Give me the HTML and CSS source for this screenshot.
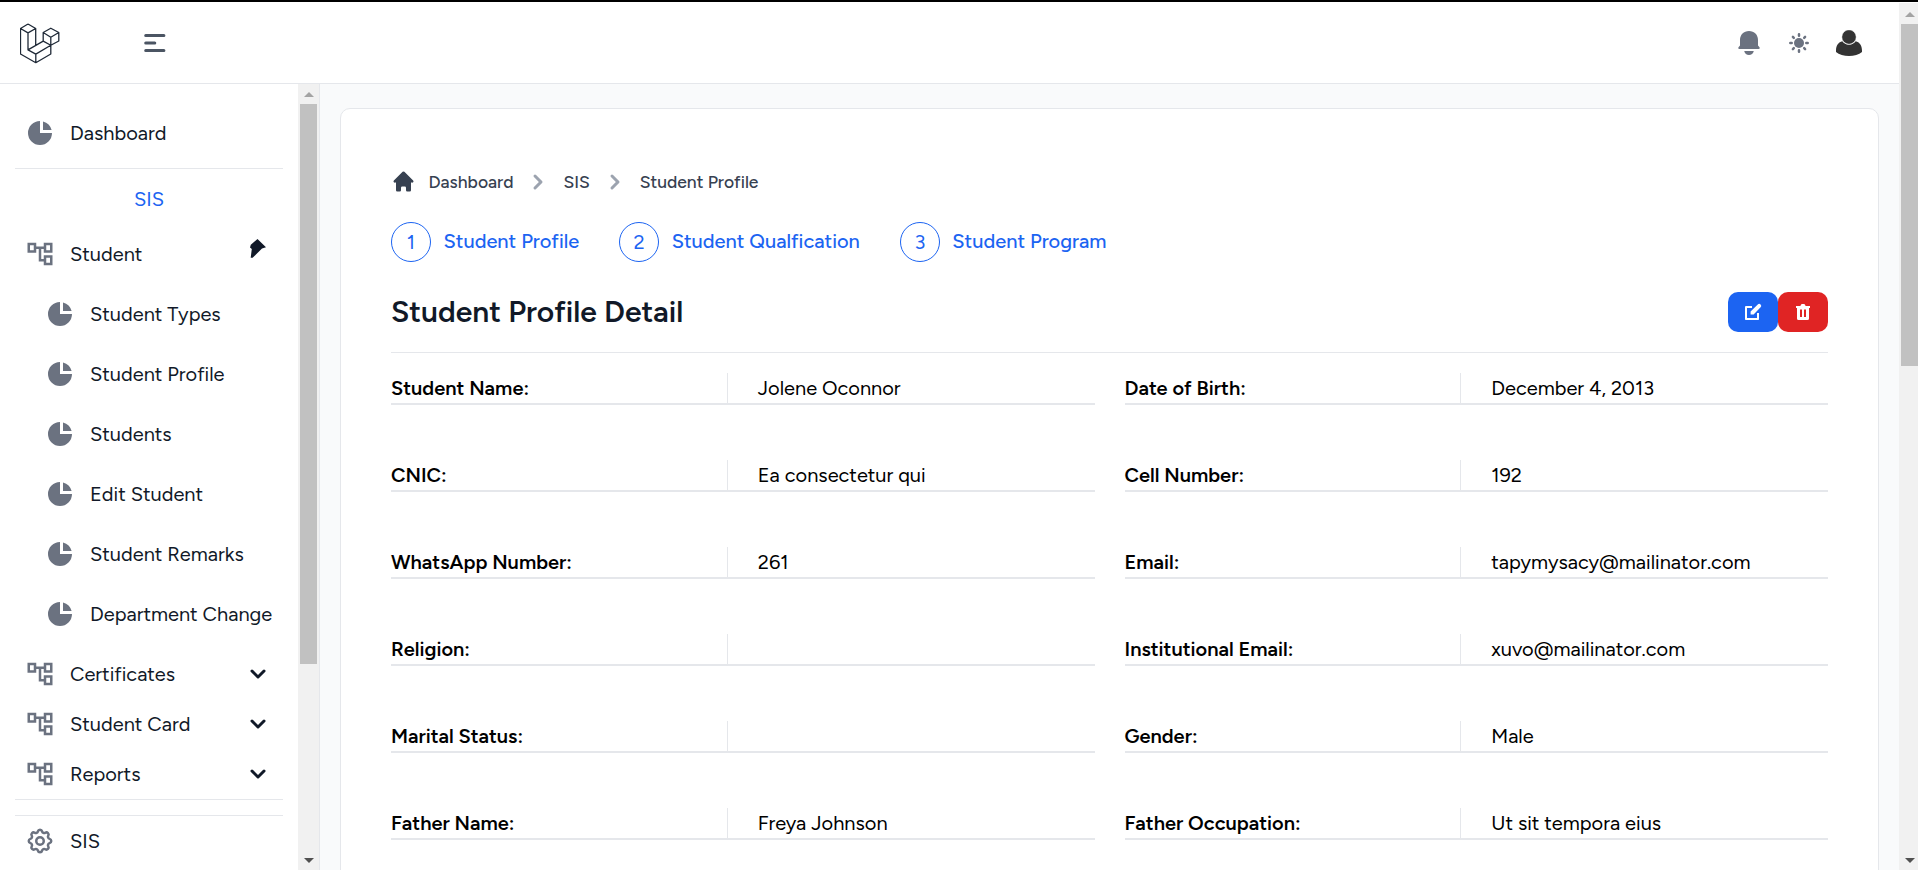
FILE: index.html
```html
<!DOCTYPE html>
<html lang="en">
<head>
<meta charset="utf-8">
<title>Student Profile</title>
<link rel="stylesheet" href="styles.css">
</head>
<body>
<svg class="defs" width="0" height="0" aria-hidden="true">
  <symbol id="pie" viewBox="0 0 20 20"><path d="M2 10a8 8 0 018-8v8h8a8 8 0 11-16 0z"/><path d="M12 2.252A8.014 8.014 0 0117.748 8H12V2.252z"/></symbol>
  <symbol id="tree" viewBox="0 0 24 24"><path d="M22 11V3h-7v3H9V3H2v8h7V8h2v10h4v3h7v-8h-7v3h-2V8h2v3h7zM7 9H4V5h3v4zm10 6h3v4h-3v-4zm0-10h3v4h-3V5z"/></symbol>
  <symbol id="down" viewBox="0 0 20 20"><path d="M5.293 7.293a1 1 0 011.414 0L10 10.586l3.293-3.293a1 1 0 111.414 1.414l-4 4a1 1 0 01-1.414 0l-4-4a1 1 0 010-1.414z"/></symbol>
  <symbol id="right" viewBox="0 0 20 20"><path d="M7.293 14.707a1 1 0 010-1.414L10.586 10 7.293 6.707a1 1 0 011.414-1.414l4 4a1 1 0 010 1.414l-4 4a1 1 0 01-1.414 0z"/></symbol>
</svg>
<header class="topbar">
  <svg class="logo" viewBox="0 0 40 41"><path d="M8 1 .5 5.500v25.500l15.300 8.700 15-8.700v-8.700l8-4.300V9.500L30.800 5.200 23.200 9.500v8.600L8 26.900V9.900L15.700 5.500 8 1M.5 5.500 8 9.900M15.700 5.500v17M8 26.900l7.800 4.200v8.600M15.800 31.100l15-8.800-7.600-4.200M23.200 9.500l7.600 4.700 8-4.700M30.800 14.200v8.100"/></svg>
  <svg class="burger" viewBox="0 0 22 18"><path d="M1.700 1.500h18.200M1.700 9h9.100M1.700 16.500h18.200"/></svg>
  <div class="tools">
    <svg class="bell" viewBox="0 0 22 25"><path d="M11 0c5.300 0 9 3.800 9 9v5.600l1.500 1.700c.5.900.2 1.700-.8 1.700H1.300c-1 0-1.300-.8-.8-1.700L2 14.600V9c0-5.200 3.700-9 9-9zM6.200 20h9.600c-.6 2.400-2.400 4-4.800 4s-4.200-1.600-4.800-4z"/></svg>
    <svg class="sun" viewBox="0 0 20 20"><circle cx="10" cy="10" r="5"/><path d="M10 1.300v1.400M10 17.300v1.400M1.300 10h1.400M17.300 10h1.400M3.900 3.900l.9.900M15.200 15.200l.9.900M3.900 16.100l.9-.9M15.200 4.800l.9-.9"/></svg>
    <svg class="user" viewBox="0 0 26 26"><path d="M0 20.500C0 15.500 2.600 12 6.300 11.300c1.500 2 4 3.400 6.700 3.400s5.200-1.400 6.700-3.400C23.400 12 26 15.500 26 20.500v1.600C23 24.900 18 26 13 26S3 24.900 0 22.100z"/><circle cx="13" cy="7" r="7.200"/></svg>
  </div>
</header>
<div class="frame">
  <aside class="side">
    <nav class="menu">
      <a class="item"><svg class="ic"><use href="#pie"/></svg><span class="t">Dashboard</span></a>
      <div class="group">SIS</div>
      <a class="item"><svg class="ic"><use href="#tree"/></svg><span class="t">Student</span><svg class="pin" viewBox="0 0 16 19"><path d="M7.500 0 16 8.200l-4 1.400-9.400 9.200H.7L1.800 10 0 8.400l.8-2.700z"/></svg></a>
      <div class="sub">
        <a class="item"><svg class="ic"><use href="#pie"/></svg><span class="t">Student Types</span></a>
        <a class="item"><svg class="ic"><use href="#pie"/></svg><span class="t">Student Profile</span></a>
        <a class="item"><svg class="ic"><use href="#pie"/></svg><span class="t">Students</span></a>
        <a class="item"><svg class="ic"><use href="#pie"/></svg><span class="t">Edit Student</span></a>
        <a class="item"><svg class="ic"><use href="#pie"/></svg><span class="t">Student Remarks</span></a>
        <a class="item"><svg class="ic"><use href="#pie"/></svg><span class="t">Department Change</span></a>
      </div>
      <a class="item"><svg class="ic"><use href="#tree"/></svg><span class="t">Certificates</span><svg class="ar"><use href="#down"/></svg></a>
      <a class="item"><svg class="ic"><use href="#tree"/></svg><span class="t">Student Card</span><svg class="ar"><use href="#down"/></svg></a>
      <a class="item"><svg class="ic"><use href="#tree"/></svg><span class="t">Reports</span><svg class="ar"><use href="#down"/></svg></a>
      <div class="gap"></div>
      <a class="item"><svg class="ic gear" viewBox="0 0 24 24"><path d="M10.325 4.317c.426-1.756 2.924-1.756 3.350 0a1.724 1.724 0 002.573 1.066c1.543-.940 3.310.826 2.370 2.370a1.724 1.724 0 001.065 2.572c1.756.426 1.756 2.924 0 3.350a1.724 1.724 0 00-1.066 2.573c.940 1.543-.826 3.310-2.370 2.370a1.724 1.724 0 00-2.572 1.065c-.426 1.756-2.924 1.756-3.350 0a1.724 1.724 0 00-2.573-1.066c-1.543.940-3.310-.826-2.370-2.370a1.724 1.724 0 00-1.065-2.572c-1.756-.426-1.756-2.924 0-3.350a1.724 1.724 0 001.066-2.573c-.940-1.543.826-3.310 2.370-2.370.996.608 2.296.070 2.572-1.065z"/><circle cx="12" cy="12" r="3"/></svg><span class="t">SIS</span></a>
    </nav>
    <div class="bar"><i class="up"></i><i class="thumb"></i><i class="dn"></i></div>
  </aside>
  <main class="main">
    <section class="card">
      <div class="crumbs">
        <svg class="home" viewBox="0 0 20 20"><path d="M10.707 2.293a1 1 0 00-1.414 0l-7 7a1 1 0 001.414 1.414L4 10.414V17a1 1 0 001 1h2a1 1 0 001-1v-2a1 1 0 011-1h2a1 1 0 011 1v2a1 1 0 001 1h2a1 1 0 001-1v-6.586l.293.293a1 1 0 001.414-1.414l-7-7z"/></svg>
        <span>Dashboard</span><svg class="chev"><use href="#right"/></svg><span>SIS</span><svg class="chev"><use href="#right"/></svg><span>Student Profile</span>
      </div>
      <div class="steps">
        <div class="step"><b>1</b><span>Student Profile</span></div>
        <div class="step"><b>2</b><span>Student Qualfication</span></div>
        <div class="step"><b>3</b><span>Student Program</span></div>
      </div>
      <div class="head">
        <h1>Student Profile Detail</h1>
        <div class="btn edit"><svg viewBox="0 0 20 20"><path d="M17.600 2.400a2 2 0 00-2.828 0L7.600 9.600v3h3l7-7.372a2 2 0 000-2.828z"/><path d="M3 4h6v2H4v10h10v-5h2v6.200a.8.800 0 01-.8.800H2.800a.8.800 0 01-.8-.8V5a1 1 0 011-1z"/></svg></div>
        <div class="btn del"><svg viewBox="0 0 20 20"><path fill-rule="evenodd" d="M9 2a1 1 0 00-.894.553L7.382 4H3v2h1v10.500a1.500 1.500 0 001.500 1.500h9a1.500 1.500 0 001.500-1.500V6h1V4h-4.382l-.724-1.447A1 1 0 0011 2H9zM7 7.500h2v7.500H7zM11 7.500h2v7.500h-2z"/></svg></div>
      </div>
      <div class="grid">
        <div class="row"><div class="k">Student Name:</div><div class="v">Jolene Oconnor</div></div>
        <div class="row"><div class="k">Date of Birth:</div><div class="v">December 4, 2013</div></div>
        <div class="row"><div class="k">CNIC:</div><div class="v">Ea consectetur qui</div></div>
        <div class="row"><div class="k">Cell Number:</div><div class="v">192</div></div>
        <div class="row"><div class="k">WhatsApp Number:</div><div class="v">261</div></div>
        <div class="row"><div class="k">Email:</div><div class="v">tapymysacy@mailinator.com</div></div>
        <div class="row"><div class="k">Religion:</div><div class="v"></div></div>
        <div class="row"><div class="k">Institutional Email:</div><div class="v">xuvo@mailinator.com</div></div>
        <div class="row"><div class="k">Marital Status:</div><div class="v"></div></div>
        <div class="row"><div class="k">Gender:</div><div class="v">Male</div></div>
        <div class="row"><div class="k">Father Name:</div><div class="v">Freya Johnson</div></div>
        <div class="row"><div class="k">Father Occupation:</div><div class="v">Ut sit tempora eius</div></div>
      </div>
    </section>
  </main>
</div>
<div class="bar pagebar"><i class="up"></i><i class="thumb"></i><i class="dn"></i></div>
</body>
</html>
```

FILE: styles.css
```css
* { box-sizing: border-box; }
body { margin: 0; width: 1918px; height: 870px; overflow: hidden; display: grid; grid-template: 84px 786px / 1899px 19px; font-family: Figtree, Lato, sans-serif; font-size: 20px; line-height: 30px; color: #111928; background: #fff; box-shadow: inset 0 2px #000; }
svg { display: block; flex: none; fill: currentColor; }
.defs { position: absolute; }
.topbar { display: flex; align-items: center; padding: 3px 37px 0 20px; border-bottom: 1px solid #e5e7eb; }
.logo { width: 40px; height: 41px; fill: none; stroke: #1f2937; stroke-width: 1.3; stroke-linejoin: round; }
.burger { width: 22px; height: 18px; margin-left: 84px; fill: none; stroke: #4b5563; stroke-width: 3; stroke-linecap: round; }
.tools { margin-left: auto; display: flex; align-items: center; color: #6b7280; }
.bell { width: 22px; height: 25px; margin-right: 29px; }
.sun { width: 20px; height: 20px; margin-right: 27px; stroke: currentColor; stroke-width: 2.5; stroke-linecap: round; }
.sun circle { stroke: none; }
.user { width: 26px; height: 26px; color: #333; }
.user circle { stroke: #fff; stroke-width: .5; }
.frame { grid-row: 2; display: flex; overflow: hidden; }
.side { width: 320px; display: flex; border-right: 1px solid #e5e7eb; flex: none; }
.menu { width: 298px; padding: 24px 15px 0; }
.item { display: flex; align-items: center; height: 50px; padding: 0 10px; white-space: nowrap; }
.ic { width: 30px; height: 30px; color: #6b7280; margin-right: 15px; }
.gear { fill: none; stroke: currentColor; stroke-width: 2; }
.ar { width: 30px; height: 30px; margin-left: auto; }
.pin { width: 16px; height: 19px; margin: -11px 7px 0 auto; }
.group { margin-top: 10px; border-top: 1px solid #e5e7eb; padding: 15px 0; height: 61px; text-align: center; color: #1c64f2; }
.sub { padding: 10px 0 10px 20px; display: grid; gap: 10px; }
.gap { height: 17px; border: solid #e5e7eb; border-width: 1px 0; }
.bar { width: 21px; display: flex; flex-direction: column; background: #f1f1f1; align-items: center; padding: 8px 0 7px; }
.up, .dn { border: 5px solid transparent; height: 0; width: 0; }
.up { border-top: 0; border-bottom-color: #a3a3a3; }
.dn { border-bottom: 0; border-top-color: #505050; margin-top: auto; }
.thumb { width: 17px; height: 560px; margin-top: 7px; background: #c1c1c1; }
.pagebar { grid-area: 1 / 2 / 3 / 3; width: 19px; margin-top: 3px; padding: 9px 0 7px 2px; }
.pagebar .thumb { height: 342px; margin-top: 7px; }
.main { flex: 1; background: #f9fafb; padding: 24px 20px 0; }
.card { height: 800px; border: 1px solid #e5e7eb; border-radius: 10px; background: #fff; padding: 58px 50px 0; }
.crumbs { display: flex; align-items: center; height: 30px; font-size: 17.5px; font-weight: 500; color: #374151; }
.home { width: 25px; height: 25px; margin: -1px 12.5px 0 0; }
.chev { width: 30px; height: 30px; color: #9ca3af; margin: 0 10px; }
.steps { display: flex; margin-top: 25px; height: 40px; color: #1c64f2; font-weight: 500; }
.step { display: flex; align-items: center; margin-right: 40px; }
.step b { width: 40px; height: 40px; border: 1px solid #1c64f2; border-radius: 50%; text-align: center; line-height: 39px; font-weight: 400; margin-right: 12.5px; }
.step span { padding-bottom: 2px; }
.head { display: flex; margin-top: 30px; height: 61px; border-bottom: 1px solid #e5e7eb; }
h1 { margin: 0 auto 0 0; font-size: 30px; line-height: 40px; font-weight: 600; }
.btn { width: 50px; height: 40px; border-radius: 10px; color: #fff; display: grid; place-items: center; }
.btn svg { width: 20px; height: 20px; }
.edit { background: #1c64f2; }
.del { background: #e02424; }
.grid { margin-top: 20px; display: grid; grid-template-columns: 1fr 1fr; gap: 55px 30px; color: #000; }
.row { display: grid; grid-template-columns: 1fr 1fr; gap: 30px; height: 32px; border-bottom: 2px solid #e5e7eb; }
.k { font-weight: 600; border-right: 1px solid #e5e7eb; }
```
